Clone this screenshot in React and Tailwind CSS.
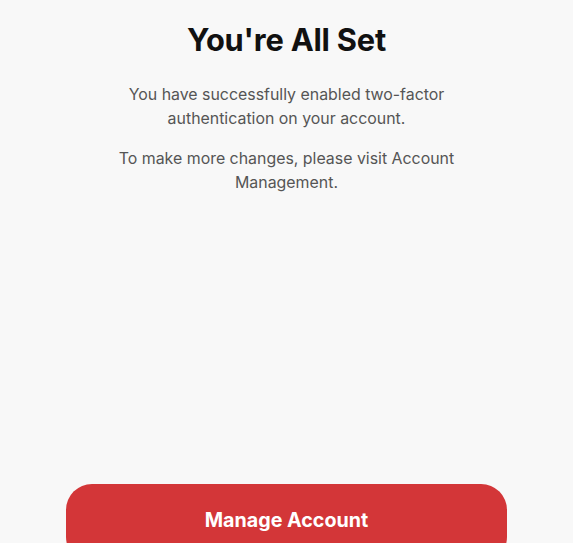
import React from 'react';

export default function App() {
  return (
    <div
      className="relative h-[543px] w-full overflow-hidden bg-[#f8f8f8] flex flex-col items-center"
      style={{ fontFamily: 'Inter, "Noto Sans", sans-serif' }}
    >
      <h1 className="mt-[21px] text-[30.8px] font-bold tracking-[-0.2px] text-[#111] leading-[38px]">You're All Set</h1>
      <div className="mt-[24px] w-[348px] text-center text-[15.9px] leading-[24px] text-[#555]">
        <p>You have successfully enabled two-factor authentication on your account.</p>
        <p className="mt-[16px]">To make more changes, please visit Account Management.</p>
      </div>
      <div className="flex-1" />
      <button className="mb-[-20px] h-[79px] w-[441px] rounded-[26px] bg-[#d33638] pb-[5px] text-[19.7px] font-bold text-white">
        Manage Account
      </button>
    </div>
  );
}
